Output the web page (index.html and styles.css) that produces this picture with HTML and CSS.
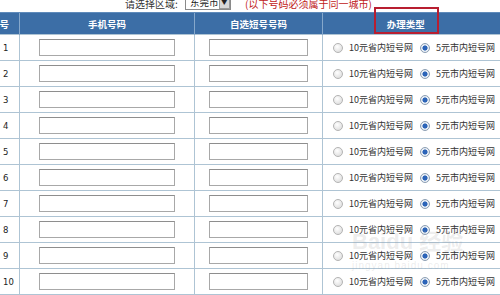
FILE: index.html
```html
<!DOCTYPE html>
<html lang="zh-CN">
<head>
  <meta charset="UTF-8">
  <title>短号办理</title>
  <link rel="stylesheet" href="styles.css">
</head>
<body>
  <div class="page">
    <div class="area-bar">
      <span class="area-label">请选择区域:</span>
      <span class="area-select">东莞市<span class="arrow">▼</span></span>
      <span class="area-tip">(以下号码必须属于同一城市)</span>
    </div>

    <table class="phone-table">
      <colgroup>
        <col class="c-no"><col class="c-phone"><col class="c-short"><col class="c-type">
      </colgroup>
      <thead>
        <tr><th>编号</th><th>手机号码</th><th>自选短号号码</th><th class="th-type">办理类型</th></tr>
      </thead>
      <tbody id="rows"></tbody>
      <tfoot>
        <tr><td colspan="4"></td></tr>
      </tfoot>
    </table>

    <!-- 标注框 -->
    <div class="mark"></div>
    <div class="watermark">Bai<span>du</span> 经验<br><small>jingyan.baidu.com</small></div>
  </div>

  <script>
    const body = document.getElementById('rows');
    for (let i = 1; i <= 10; i++) {
      const tr = document.createElement('tr');
      tr.innerHTML = `
        <td class="no">${i}</td>
        <td><span class="box box-phone"></span></td>
        <td><span class="box box-short"></span></td>
        <td class="type"><span class="radio"></span><span class="opt">10元省内短号网</span><span class="radio on"></span><span class="opt">5元市内短号网</span></td>`;
      body.appendChild(tr);
    }
  </script>
</body>
</html>
```

FILE: styles.css
```css
body {
  margin: 0;
  font-family: "Noto Sans CJK SC", "Liberation Sans", sans-serif;
  background: #fff;
  color: #333;
}
.page {
  position: relative;
  width: 500px;
  height: 295px;
  overflow: hidden;
}

/* 区域选择 */
.area-bar {
  height: 12px;
  display: flex;
  align-items: flex-end;
  padding-left: 125px;
  font-size: 10px;
  line-height: 14px;
  white-space: nowrap;
  overflow: hidden;
}
.area-label {
  flex-shrink: 0;
  color: #333;
  width: 60px;
  margin-bottom: 1px;
}
.area-select {
  flex-shrink: 0;
  display: flex;
  align-items: center;
  width: 46px;
  height: 16px;
  margin-bottom: 2px;
  padding-left: 4px;
  border: 1px solid #8a8a8a;
  box-sizing: border-box;
  font-size: 9.5px;
  color: #222;
}
.area-select .arrow {
  margin-left: auto;
  width: 10px;
  height: 12px;
  font-size: 6px;
  line-height: 12px;
  text-align: center;
  background: #d8d8d8;
  border: 1px solid #999;
}
.area-tip {
  margin-left: 14px;
  margin-bottom: 1px;
  color: #c02020;
}

/* 表格 */
.phone-table {
  margin-left: -21px;
  border-collapse: collapse;
  table-layout: fixed;
  width: 545px;
  font-size: 9px;
}
.c-no { width: 40px; }
.c-phone { width: 175px; }
.c-short { width: 128px; }
.c-type { width: 202px; }
.phone-table th {
  height: 21px;
  padding: 0;
  background: #3c6ea6;
  color: #fff;
  font-weight: bold;
  font-size: 9.5px;
  border-left: 1px solid #86a8cb;
  border-top: 1px solid #5f8bbb;
}
.phone-table th.th-type {
  padding-right: 36px;
}
.phone-table td {
  height: 25px;
  padding: 0;
  border: 1px solid #aec4d4;
}
.phone-table td.no {
  padding-left: 23px;
  font-family: "DejaVu Sans", sans-serif;
  font-size: 8.5px;
  color: #222;
}
.box {
  display: block;
  height: 17px;
  box-sizing: border-box;
  border: 1px solid #a8a8a8;
  border-top-color: #8e8e8e;
  background: #fff;
}
.box-phone { margin: 0 19px 0 19px; }
.box-short { margin: 0 14px 0 14px; }

.type {
  white-space: nowrap;
  color: #333;
}
.radio {
  display: inline-block;
  vertical-align: middle;
  width: 8px;
  height: 8px;
  margin: 0 6px 0 10px;
  border-radius: 50%;
  border: 1px solid #b4b4b4;
  background: radial-gradient(circle at 40% 35%, #fff, #d6d6d6);
}
.radio.on {
  margin-left: 7px;
  border-color: #8d9fb3;
  background: radial-gradient(circle, #2c64b8 0 2.3px, #e8eef5 2.8px);
}
.opt {
  vertical-align: middle;
}

.phone-table tfoot td {
  height: 4px;
  border: none;
  background: #3c6ea6;
}

/* 红色标注框 */
.mark {
  position: absolute;
  left: 374px;
  top: 7px;
  width: 65px;
  height: 27px;
  box-sizing: border-box;
  border: 2px solid #b81e30;
}

.watermark {
  position: absolute;
  left: 352px;
  top: 232px;
  color: rgba(150, 150, 150, 0.18);
  font-family: "Liberation Sans", "Noto Sans CJK SC", sans-serif;
  font-size: 22px;
  font-weight: bold;
  line-height: 20px;
  pointer-events: none;
}
.watermark small {
  font-size: 10px;
  font-weight: normal;
  letter-spacing: 1px;
}
```
